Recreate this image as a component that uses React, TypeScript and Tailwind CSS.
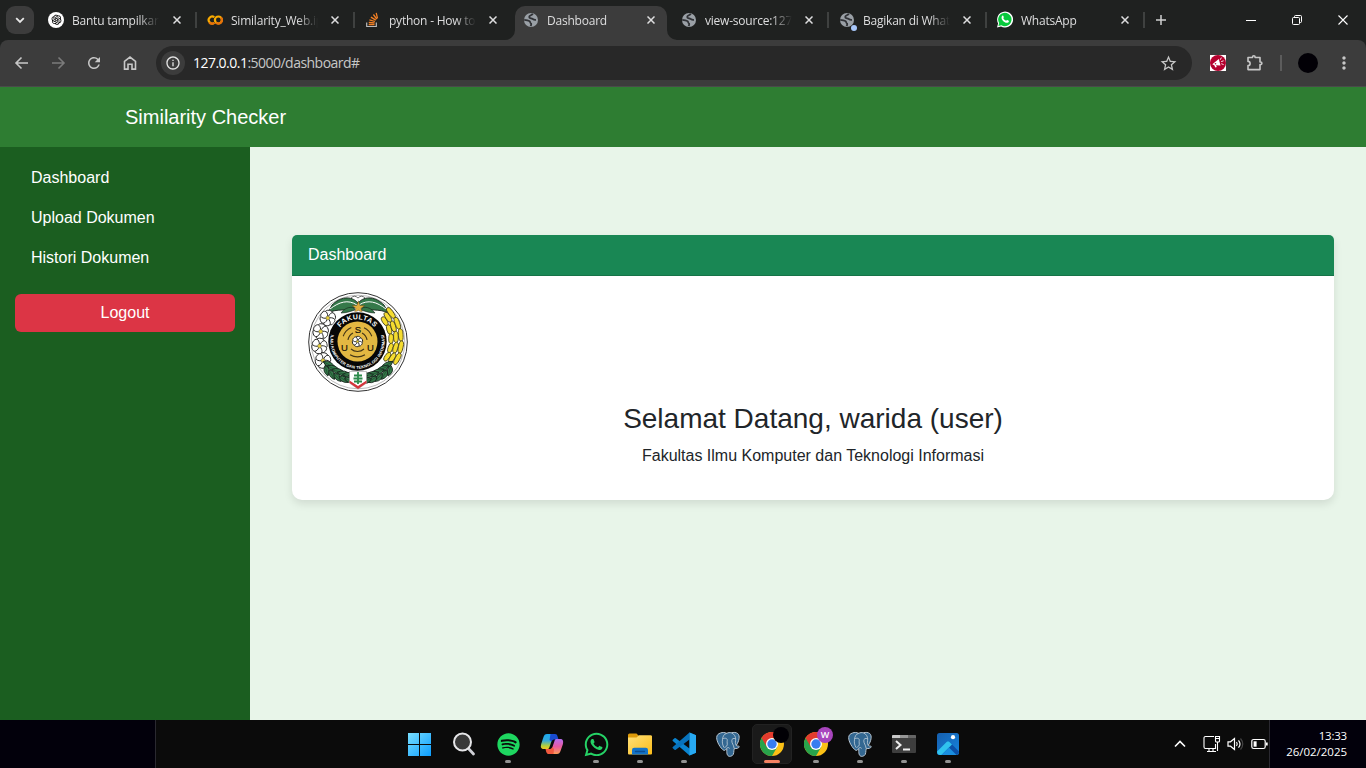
import React from "react";
import { AiOutlineOpenAI } from "react-icons/ai";
import { FaSpotify, FaWhatsapp } from "react-icons/fa";
import { MdRefresh, MdStarBorder, MdMoreVert, MdOutlineInfo } from "react-icons/md";

const range = (n: number) => Array.from({ length: n }, (_, i) => i);

/* ---------- tab icons ---------- */

function Globe() {
  return (
    <svg width="16" height="16" viewBox="0 0 16 16">
      <circle cx="8" cy="8" r="7" fill="#9aa0a6" />
      <path
        d="M9.8 1.8C8.8 3.600 6.200 3 6.200 5c0 1.600 2.200 1 3.200 1.800 1 .7 1.300 1.200 3.600 1"
        fill="none"
        stroke="#303236"
        strokeWidth="1.8"
      />
      <path d="M1.200 7.800C3.500 8 5 8.200 6.300 9c1.500.8.3 1.700 1.500 2.300.9.4.3 1.800-.3 2.700" fill="none" stroke="#303236" strokeWidth="1.8" />
    </svg>
  );
}

function OpenAiIcon() {
  return (
    <span className="flex size-4 items-center justify-center rounded-full bg-white text-black">
      <AiOutlineOpenAI size={13} />
    </span>
  );
}

function Colab() {
  return (
    <svg width="16" height="16" viewBox="0 0 16 16" fill="none" strokeWidth="2.2">
      <path d="M7.300 5.200A3.500 3.500 0 1 0 7.300 10.800" stroke="#f9ab00" />
      <path d="M2.300 10.500a3.500 3.500 0 0 0 5 .3" stroke="#e8710a" />
      <circle cx="11.400" cy="8" r="3.500" stroke="#f9ab00" />
      <path d="M8.900 10.500a3.500 3.500 0 0 0 5-5" stroke="#e8710a" />
    </svg>
  );
}

function StackOverflow() {
  return (
    <svg width="16" height="16" viewBox="0 0 16 16" fill="none">
      <path d="M1.700 10.400v4.100h9.600v-4.100" stroke="#bcbbbb" strokeWidth="1.2" />
      <path
        d="M3.700 12.500h5.800M3.800 10.300l5.800.6M4.400 7.800l5.500 1.700M5.900 5.100l4.900 3M8.400 2.500l3.400 4.600M11.200.9l1.300 5.500"
        stroke="#f48024"
        strokeWidth="1.3"
      />
    </svg>
  );
}

function BadgedGlobe() {
  return (
    <span className="relative block size-4">
      <Globe />
      <span className="absolute -right-[2px] -bottom-[3px] size-[6px] rounded-full bg-[#a8c7fa]" />
    </span>
  );
}

function WhatsTab() {
  return (
    <svg width="17" height="17" viewBox="0 0 16 16">
      <path d="M0 16l1.100-4.100A8 8 0 1 1 4 14.900z" fill="#fff" />
      <path d="M1.400 14.600l.8-3A6.700 6.700 0 1 1 4.500 13.800z" fill="#08c93c" />
      <path
        d="M5.300 4.200c.8-.5 1 0 1.500 1.400.2.500-.6.9-.5 1.200.6 1.200 1.500 2 2.800 2.500.4.100.8-.9 1.200-.7 1.500.7 1.800.8 1.500 1.600-.6 1.500-2.600 1.300-4.400.2C5.400 9.200 3.400 6.200 5.300 4.200z"
        fill="#fff"
      />
    </svg>
  );
}

const tabs = [
  { title: "Bantu tampilkan", icon: <OpenAiIcon />, sep: true },
  { title: "Similarity_Web.ip", icon: <Colab />, sep: true },
  { title: "python - How to", icon: <StackOverflow />, sep: false },
  { title: "Dashboard", icon: <Globe />, active: true, sep: false },
  { title: "view-source:127.", icon: <Globe />, sep: true },
  { title: "Bagikan di What", icon: <BadgedGlobe />, sep: true },
  { title: "WhatsApp", icon: <WhatsTab />, sep: true },
];

function Cross({ size = 8, stroke = 1.5 }: { size?: number; stroke?: number }) {
  return (
    <svg width={size} height={size} viewBox={`0 0 ${size} ${size}`} stroke="currentColor" strokeWidth={stroke}>
      <path d={`M.5 .5L${size - 0.5} ${size - 0.5}M${size - 0.5} .5L.5 ${size - 0.5}`} />
    </svg>
  );
}

function TabStrip() {
  return (
    <div className="flex h-10 bg-[#1f2120] text-[#dededf]">
      <div className="mt-1.5 ml-1.5 flex size-7 items-center justify-center rounded-[9px] bg-[#3c3c3c]">
        <svg width="10" height="7" viewBox="0 0 10 7" fill="none" stroke="#e8e8e8" strokeWidth="1.8">
          <path d="M1.200 1.200 5 5l3.800-3.800" />
        </svg>
      </div>
      <div className="ml-1 flex">
        {tabs.map((t) => (
          <div key={t.title} className="group relative flex h-10 w-[158px] items-center pl-[11px] first:pl-[10px]">
            {t.active && (
              <svg className="absolute top-0 left-0 overflow-visible" width="158" height="40" viewBox="0 0 158 40">
                <path d="M-7 40A10 10 0 0 0 3 30V16A10 10 0 0 1 13 6H145A10 10 0 0 1 155 16V30A10 10 0 0 0 165 40z" fill="#3c3c3c" />
              </svg>
            )}
            <span className="relative -mt-px flex size-4 shrink-0 items-center justify-center">{t.icon}</span>
            <span className="relative mt-[2px] ml-2 w-[87px] overflow-hidden text-xs tracking-[-0.22px] whitespace-nowrap [mask-image:linear-gradient(to_right,#000_76%,transparent)]">
              {t.title}
            </span>
            <span className="relative ml-[13px] flex size-2 group-first:ml-[14px]">
              <Cross />
            </span>
            {t.sep && <span className="absolute top-3 -right-px h-4 w-[2px] bg-[#3f4140]" />}
          </div>
        ))}
      </div>
      <svg className="mt-[15px] ml-[12px]" width="10" height="10" viewBox="0 0 10 10" stroke="#d0d0d0" strokeWidth="1.5">
        <path d="M5 0v10M0 5h10" />
      </svg>
      <div className="ml-auto flex h-10 items-center text-white">
        <div className="flex w-[46px] justify-center">
          <span className="h-px w-[10px] bg-white" />
        </div>
        <div className="flex w-[46px] justify-center">
          <svg width="10" height="10" viewBox="0 0 10 10" fill="none" stroke="#fff">
            <rect x=".5" y="2.500" width="7" height="7" rx="1" />
            <path d="M2.500 2.500V1.500a1 1 0 0 1 1-1h5a1 1 0 0 1 1 1v5a1 1 0 0 1-1 1h-1" />
          </svg>
        </div>
        <div className="flex w-[46px] justify-center">
          <Cross size={10} stroke={1.1} />
        </div>
      </div>
    </div>
  );
}

function Arrow({ flip = false }: { flip?: boolean }) {
  return (
    <svg width="16" height="16" viewBox="0 0 16 16" fill="none" stroke="currentColor" strokeWidth="1.6">
      <path d={flip ? "M2 8h11.500M8.500 2.500 14 8l-5.500 5.500" : "M14 8H2.500M7.500 2.500 2 8l5.500 5.500"} />
    </svg>
  );
}

function Toolbar() {
  return (
    <div className="bg-[#1f2120]">
      <div className="flex h-[47px] items-center rounded-t-[8px] border-b border-[#4a4a4a] bg-[#3c3c3c] pl-[14px] text-[#c7c7c7]">
        <Arrow />
        <span className="ml-5 text-[#7b7b7b]">
          <Arrow flip />
        </span>
        <MdRefresh size={18} className="ml-[19px]" />
        <svg className="ml-5" width="14" height="16" viewBox="0 0 14 16" fill="none" stroke="currentColor" strokeWidth="1.6">
          <path d="M1.500 6.300 7 2l5.500 4.300v7.800H9V9.200H5v4.900H1.500z" />
        </svg>
        <div className="ml-[19px] flex h-[34px] w-[1036px] items-center rounded-full bg-[#282828] pl-[5px]">
          <span className="flex size-6 items-center justify-center rounded-full bg-[#3c3c3c] text-[#e3e3e3]">
            <MdOutlineInfo size={16} />
          </span>
          <span className="ml-2 text-sm tracking-[-0.52px] text-[#c7c7c7]">
            <span className="text-white">127.0.0.1</span>:5000/dashboard#
          </span>
          <MdStarBorder size={19} className="mr-[14px] ml-auto" />
        </div>
        <svg className="ml-[18px]" width="16" height="16" viewBox="0 0 16 16">
          <rect width="16" height="16" fill="#fff" />
          <circle cx="8" cy="8" r="8" fill="#b5002e" />
          <path d="M2.300 9.200 8.800 4l1.700 6.500-4.500-.3.800 1.800-1.500.5-1-2.300z" fill="#fff" />
          <circle cx="5.500" cy="8.700" r=".8" fill="#b5002e" />
          <path d="M10.200 4.800l1.200-2.200M11.200 6.600l2.400-.8M11.300 8.700l2.300.9" stroke="#fff" strokeWidth=".9" />
        </svg>
        <svg className="ml-5" width="18" height="18" viewBox="0 0 18 18" fill="none" stroke="currentColor" strokeWidth="1.6" strokeLinejoin="round">
          <path d="M2 3.500H6.500V3a1.300 1.300 0 0 1 2.600 0v.5H14V8h.6a1.300 1.300 0 0 1 0 2.600H14v5H2v-4a2.100 2.100 0 0 0 0-4.200z" />
        </svg>
        <span className="ml-[16px] h-4 w-[2px] bg-[#5c5c5c]" />
        <span className="ml-[16px] size-5 rounded-full bg-[#020006]" />
        <MdMoreVert size={20} className="ml-4" />
      </div>
    </div>
  );
}

/* ---------- faculty emblem ---------- */

function Flower({ x, y, r, n = 6 }: { x: number; y: number; r: number; n?: number }) {
  return (
    <g transform={`translate(${x} ${y})`}>
      {range(n).map((i) => (
        <path
          key={i}
          transform={`rotate(${(i * 360) / n + 12})`}
          d={`M0 0C${-r * 0.6} ${-r * 0.45} ${-r * 0.65} ${-r} 0 ${-r}C${r * 0.65} ${-r} ${r * 0.55} ${-r * 0.45} 0 0z`}
          fill="#fff"
          stroke="#222"
          strokeWidth=".9"
        />
      ))}
      <circle r={r * 0.25} fill="#e8cf3a" stroke="#555" strokeWidth=".5" />
    </g>
  );
}

function Leaf({ x, y, a, l, w = 4 }: { x: number; y: number; a: number; l: number; w?: number }) {
  return (
    <g transform={`translate(${x} ${y}) rotate(${a})`}>
      <path d={`M0 0Q${l * 0.45} ${-w * 1.6} ${l} 0Q${l * 0.45} ${w * 1.3} 0 0z`} fill="#35794a" stroke="#14221a" strokeWidth=".8" />
      <path d={`M1 0H${l - 1}`} stroke="#183822" strokeWidth=".5" />
    </g>
  );
}

function Emblem() {
  const star = range(10)
    .map((i) => {
      const r = i % 2 ? 2.7 : 6.8;
      const a = (i * Math.PI) / 5 - Math.PI / 2;
      return `${50.4 + r * Math.cos(a)},${15.6 + r * Math.sin(a)}`;
    })
    .join(" ");
  return (
    <svg width="100" height="100" viewBox="0 0 100 100" className="block font-['Liberation_Sans',sans-serif]">
      <circle cx="50" cy="50" r="49.3" fill="#fff" stroke="#333" strokeWidth="1" />
      <circle cx="50" cy="50" r="46.8" fill="none" stroke="#777" strokeWidth=".5" />
      <path d="M43 6q3.500-3.500 7 0 3.500-3.500 7 0l-3 5h-8z" fill="#fff" stroke="#333" strokeWidth=".7" />
      <path d="M50 11C43 3 32 5 24 13Q22 17 20 21C29 16 38 20 49 15z" fill="#35794a" stroke="#14221a" strokeWidth=".9" />
      <path d="M50 11C57 3 68 5 76 13Q78 17 80 21C71 16 62 20 51 15z" fill="#35794a" stroke="#14221a" strokeWidth=".9" />
      <path d="M49 13C40 7 31 10 22 17M51 13C60 7 69 10 78 17" fill="none" stroke="#fff" strokeWidth="1" />
      <path d="M46 16C41 14 36 17 33 21 39 21 43 19 47 18zM54 16C59 14 64 17 67 21 61 21 57 19 53 18z" fill="#35794a" stroke="#14221a" strokeWidth=".6" />
      <polygon points={star} fill="#dfad3d" stroke="#5d481c" strokeWidth=".5" />
      {range(3).map((c) =>
        range(5).map((r) => {
          const deg = -36 + r * 16 - c * 2;
          const a = (deg * Math.PI) / 180;
          const rad = 33.6 + c * 5;
          const h = rad * 0.145;
          return (
            <g key={`${c}-${r}`} transform={`translate(${49.5 + rad * Math.cos(a)} ${49 + rad * Math.sin(a)}) rotate(${deg})`}>
              <path
                d={`M0 ${-h}Q3.200 ${-h} 2.400 0Q2 ${h} 0 ${h}Q-2.900 ${h} -2.300 0Q-2 ${-h} 0 ${-h}z`}
                fill="#f5dc30"
                stroke="#3d3919"
                strokeWidth=".8"
              />
            </g>
          );
        })
      )}
      <Flower x={19.8} y={26} r={7.800} />
      <Flower x={12.7} y={39.5} r={7.800} />
      <Flower x={11.500} y={54} r={7.800} />
      <Flower x={15} y={68.5} r={7.800} />
      {range(6).map((i) => {
        const a = ((142 - i * 9) * Math.PI) / 180;
        const x = 50 + 38 * Math.cos(a);
        const y = 50 + 38 * Math.sin(a);
        return (
          <g key={i}>
            <Leaf x={x - 5} y={y - 4} a={30 - i * 6} l={15} w={3.6} />
            <Leaf x={x - 3} y={y} a={75 - i * 14} l={11} w={3.600} />
            <Leaf x={105 - x} y={y - 4} a={150 + i * 6} l={15} w={3.600} />
            <Leaf x={103 - x} y={y} a={105 + i * 14} l={11} w={3.600} />
          </g>
        );
      })}
      <circle cx="49.500" cy="49.500" r="30" fill="#fff" />
      <circle cx="49.500" cy="49.500" r="29.200" fill="#070707" />
      <circle cx="49.500" cy="49.500" r="20" fill="#e3b842" />
      <path
        d="M43.300 35.600A15.200 15.200 0 0 0 35.200 44.300M56 35.700A15.200 15.200 0 0 1 63.800 44.300M42 62.700A15.200 15.200 0 0 0 57 62.700M45 41A9.700 9.700 0 0 0 40 48M54 41A9.700 9.700 0 0 1 59 48M43 57A9.700 9.700 0 0 0 56 57"
        fill="none"
        stroke="#453717"
        strokeWidth="1.1"
      />
      <Flower x={49.500} y={49.500} r={5.200} />
      <g fontSize="9.5" fill="#171307" textAnchor="middle" stroke="#171307" strokeWidth=".2">
        <text x="50" y="40.500">S</text>
        <text x="36.500" y="58.500">U</text>
        <text x="62.500" y="58.500">U</text>
      </g>
      <defs>
        <path id="ringTop" d="M27.300 49.500A22.200 22.200 0 0 1 71.700 49.500" />
        <path id="ringBottom" d="M23.500 41.500A27.200 27.200 0 1 0 75.500 41.500" />
      </defs>
      <text fontSize="7" fontWeight="700" fill="#fff" letterSpacing=".4" textAnchor="middle">
        <textPath href="#ringTop" startOffset="50%">
          FAKULTAS
        </textPath>
      </text>
      <text fontSize="4.1" fontWeight="700" fill="#fff" textAnchor="middle">
        <textPath href="#ringBottom" startOffset="50%" textLength="99">
          ILMU KOMPUTER DAN TEKNOLOGI INFORMASI
        </textPath>
      </text>
      <path d="M41.500 79.500H58.500V91L50 97 41.500 91z" fill="#fff" stroke="#999" strokeWidth=".6" />
      <path d="M41.500 88.500 50 94 58.500 88.500V91L50 97 41.500 91z" fill="#d5343b" />
      <path d="M50 80v12M46 83.500h8M45.500 86.500h9M46 89.500h8" stroke="#2b8a4a" strokeWidth="1.8" />
    </svg>
  );
}

/* ---------- application page ---------- */

function Page() {
  return (
    <div className="flex h-[633px] flex-col font-['Liberation_Sans',Arial,sans-serif] text-base leading-6">
      <header className="flex h-[60px] shrink-0 items-center bg-[#2e7d32] pl-[125px] text-xl text-white">Similarity Checker</header>
      <div className="flex min-h-0 flex-1">
        <nav className="flex w-[250px] shrink-0 flex-col bg-[#1b5e20] px-[15px] pt-[11px] text-white">
          {["Dashboard", "Upload Dokumen", "Histori Dokumen"].map((l) => (
            <a key={l} href="#" className="px-4 py-2">
              {l}
            </a>
          ))}
          <button className="mt-4 h-[38px] rounded-md bg-[#dc3545]">Logout</button>
        </nav>
        <main className="flex-1 bg-[#e8f5e9] pt-[88px] pr-8 pl-[42px]">
          <section className="h-[265px] rounded-t-[5px] rounded-b-[10px] bg-white shadow-[0_4px_8px_rgba(0,0,0,0.1)]">
            <h2 className="h-[41px] rounded-t-[5px] border-b border-[#167347] bg-[#198754] px-4 pt-2 text-white">Dashboard</h2>
            <div className="p-4 text-center text-[#212529]">
              <div className="h-[110px]">
                <Emblem />
              </div>
              <h1 className="mb-2 text-[28px] leading-[34px]">Selamat Datang, warida (user)</h1>
              <p>Fakultas Ilmu Komputer dan Teknologi Informasi</p>
            </div>
          </section>
        </main>
      </div>
    </div>
  );
}

/* ---------- taskbar ---------- */

function WindowsLogo() {
  return (
    <svg width="24" height="24" viewBox="0 0 24 24">
      <defs>
        <linearGradient id="win" x1="0" y1="0" x2="24" y2="24" gradientUnits="userSpaceOnUse">
          <stop stopColor="#7be0ff" />
          <stop offset="1" stopColor="#0a9cff" />
        </linearGradient>
      </defs>
      <path d="M0 1h11v11H0zM12 1h11v11H12zM0 13h11v11H0zM12 13h11v11H12z" fill="url(#win)" />
    </svg>
  );
}

function SearchIcon() {
  return (
    <svg width="24" height="24" viewBox="0 0 24 24">
      <path d="m16 16 5.500 6" stroke="#cfd0d6" strokeWidth="2.8" strokeLinecap="round" />
      <circle cx="10.500" cy="10" r="8.500" fill="#383838" stroke="#e6e6e8" strokeWidth="2" />
    </svg>
  );
}

function Copilot() {
  return (
    <svg width="24" height="24" viewBox="0 0 24 24">
      <defs>
        <linearGradient id="cpa" x1="0" y1="0" x2="0" y2="1">
          <stop stopColor="#1ba8f0" />
          <stop offset=".45" stopColor="#35a9d8" />
          <stop offset=".8" stopColor="#b8cf35" />
          <stop offset="1" stopColor="#f0c526" />
        </linearGradient>
        <linearGradient id="cpb" x1="0" y1="0" x2="0" y2="1">
          <stop stopColor="#b76df2" />
          <stop offset=".5" stopColor="#e85aa0" />
          <stop offset="1" stopColor="#ff9c55" />
        </linearGradient>
      </defs>
      <path d="M7 2h7L9.500 15c-.5 1.400-1 2-2 2H4C1 17 .3 15.500 1.200 12L3.500 5C4.200 3 5 2 7 2z" fill="url(#cpa)" />
      <path d="M10.500 2H15c1.600 0 2 .8 2.500 2.300L18.500 7.500H15c-2 0-2.700.5-3.300 2L9.500 8z" fill="#194bd0" />
      <path d="M17 22h-7l4.500-13c.5-1.400 1-2 2-2H20c3 0 3.700 2 2.800 5.500L20.500 19c-.7 2-1.500 3-3.500 3z" fill="url(#cpb)" />
      <path d="M13.500 22H9c-1.600 0-2.300-.8-2.800-2.300L5.500 17H9c2 0 2.500-.5 3.200-2L14 17z" fill="#f2593e" />
    </svg>
  );
}

function Folder() {
  return (
    <svg width="24" height="24" viewBox="0 0 24 24">
      <defs>
        <linearGradient id="fold" x1="0" y1="0" x2="1" y2="1">
          <stop stopColor="#ffe17a" />
          <stop offset="1" stopColor="#fcbc19" />
        </linearGradient>
      </defs>
      <path d="M0 3a1.500 1.500 0 0 1 1.500-1.500h7L11 4v6H0z" fill="#dd9a09" />
      <path d="M0 5.500h8.500L11 3.300h11.500A1.500 1.500 0 0 1 24 5v16.500a1 1 0 0 1-1 1H1a1 1 0 0 1-1-1z" fill="url(#fold)" />
      <path d="M4 22.500V18a2.200 2.200 0 0 1 2.200-2.200h11.600A2.200 2.200 0 0 1 20 18v4.500z" fill="#1373c8" />
      <path d="M7.500 19.500h9" stroke="#0b4d91" strokeWidth="1.3" strokeLinecap="round" />
    </svg>
  );
}

function VsCode() {
  return (
    <svg width="24" height="24" viewBox="0 0 24 24">
      <path d="M17.500.500 24 3.300v17.400l-6.500 2.800L.8 9a.8.800 0 0 1 0-1.200l1.700-1.500a1 1 0 0 1 1.300 0L17.500 16.500z" fill="#0a84d0" />
      <path d="M17.500.500V7.500L3.800 17.700a1 1 0 0 1-1.300 0L.8 16.200a.8.800 0 0 1 0-1.200z" fill="#0873bd" />
      <path d="M17.500.500 24 3.300v17.400l-6.500 2.800z" fill="#27a9f2" />
    </svg>
  );
}

function Postgres() {
  return (
    <svg width="26" height="26" viewBox="0 0 26 26">
      <path
        d="M5.500 2c2-.8 4.500-.6 6.200.3 1.700-.8 3-.9 4.800-.5 2-.6 4.700-.6 6.300.8 2.500 2.200 1.300 7.500-1.500 11.800.5 1 2.500.3 3 1.200-.4 1.700-3 2.300-5 1.800-.9 2.500.2 6-2.500 7.500-3.600 1.500-5-.7-5-4.400v-3c-1.200.9-1.500 2.300-3 1.800C5.500 17.500 1.500 10.500 1.700 6.500 1.800 4 3.300 2.700 5.500 2z"
        fill="#336791"
        stroke="#b9c7d3"
        strokeWidth="1"
      />
      <path
        d="M9 16.500c-1.300-2.500-2-4.500-1.500-8C7.800 5 9.300 3 11.700 2.300M9.500 16.500c2-1 3.200-1.700 2.700-4.500-.4-2 .8-3-.6-4.300-1.200-.8-2.700-.5-4 .2M16.500 1.800c3 1.500 4.200 4 4.200 6.200 0 2.500-1 4 .6 6.400M20.500 7.700c-2-.7-3.700-.2-3.700 2 0 3 1.700 3.500 2.300 7.500M11.800 17c1.200-.7 2.500-.5 2.700.5"
        fill="none"
        stroke="#c3d0da"
        strokeWidth=".8"
      />
    </svg>
  );
}

function Chrome({ badge }: { badge: "dark" | "w" }) {
  return (
    <span className="relative block size-6">
      <svg width="24" height="24" viewBox="0 0 24 24">
        <circle cx="12" cy="12" r="12" fill="#fbc116" />
        <path d="M12 12 1.600 6A12 12 0 0 0 12 24l5.200-9z" fill="#28a34b" />
        <path d="M1.600 6A12 12 0 0 1 22.400 6H12L6.800 15z" fill="#e33b2e" />
        <circle cx="12" cy="12" r="6" fill="#fff" />
        <circle cx="12" cy="12" r="4.700" fill="#377df0" />
      </svg>
      {badge === "dark" ? (
        <span className="absolute -top-[5px] left-[13px] size-4 rounded-full bg-[#010005]" />
      ) : (
        <span className="absolute -top-[5px] left-[13px] flex size-4 items-center justify-center rounded-full bg-[#a845bd] text-[9px] font-semibold text-white">
          W
        </span>
      )}
    </span>
  );
}

function Terminal() {
  return (
    <svg width="24" height="24" viewBox="0 0 24 24">
      <rect y="3" width="24" height="18" rx="1" fill="#3e3e3e" />
      <path d="M1 3h7v3H0V4a1 1 0 0 1 1-1z" fill="#c8c8c8" />
      <path d="M8 3h8v3H8z" fill="#969696" />
      <path d="M16 3h7a1 1 0 0 1 1 1v2h-8z" fill="#666" />
      <path d="m4 9 4.500 4L4 17M11 17.500h7" fill="none" stroke="#eee" strokeWidth="2" />
    </svg>
  );
}

function Photos() {
  return (
    <svg width="22" height="22" viewBox="0 0 22 22">
      <defs>
        <linearGradient id="ph" x1="0" y1="0" x2="1" y2="1">
          <stop stopColor="#165fae" />
          <stop offset="1" stopColor="#1583de" />
        </linearGradient>
      </defs>
      <rect width="22" height="22" rx="2.500" fill="url(#ph)" />
      <path d="M0 18.500 9.500 9a2 2 0 0 1 3 0l9.500 9.500c0 2-1.300 3.500-3 3.500H3c-1.700 0-3-1.500-3-3.500z" fill="#0b50a8" />
      <path d="M0 18.500 9.500 9a2 2 0 0 1 3 0L15 11.500 4.500 22H3c-1.700 0-3-1.500-3-3.500z" fill="#30c3ee" />
      <path d="M4.500 22 12 14.500 19.500 22z" fill="#1a8fe0" />
      <circle cx="16" cy="4.200" r="2.100" fill="#fff" />
    </svg>
  );
}

const apps: { icon: React.ReactNode; running?: boolean; active?: boolean }[] = [
  { icon: <WindowsLogo /> },
  { icon: <SearchIcon /> },
  { icon: <FaSpotify size={23} color="#1ed760" />, running: true },
  { icon: <Copilot /> },
  { icon: <FaWhatsapp size={27} color="#25d366" />, running: true },
  { icon: <Folder />, running: true },
  { icon: <VsCode />, running: true },
  { icon: <Postgres /> },
  { icon: <Chrome badge="dark" />, active: true },
  { icon: <Chrome badge="w" />, running: true },
  { icon: <Postgres />, running: true },
  { icon: <Terminal />, running: true },
  { icon: <Photos />, running: true },
];

function Taskbar() {
  return (
    <footer className="flex h-12 bg-[#0b0b0b] text-white">
      <div className="w-[156px] border-r border-[#2a2930] bg-[#02000b]" />
      <div className="ml-[242px] flex">
        {apps.map((a, i) => (
          <div key={i} className="relative flex w-11 items-center justify-center">
            {a.active && <span className="absolute inset-x-[2px] inset-y-1 rounded-[5px] border border-[#222] bg-[#1a1a1a]" />}
            <span className="relative">{a.icon}</span>
            {a.running && <span className="absolute bottom-[5px] left-[19px] h-[3px] w-[6px] rounded-full bg-[#929292]" />}
            {a.active && <span className="absolute bottom-[5px] left-[14px] h-[3px] w-4 rounded-full bg-[#f58263]" />}
          </div>
        ))}
      </div>
      <div className="ml-auto flex items-center">
        <svg width="12" height="8" viewBox="0 0 12 8" fill="none" stroke="#fff" strokeWidth="1.600">
          <path d="m1 6.500 5-5 5 5" />
        </svg>
        <svg className="ml-[17px]" width="18" height="18" viewBox="0 0 18 18" fill="none" stroke="#fff" strokeWidth="1.1">
          <path d="M11 1.500H2.500A1.500 1.500 0 0 0 1 3v9a1.500 1.500 0 0 0 1.500 1.500H12.500V9M4 16.500h9M6 13.500v3M10 13.500v3" />
          <path d="M12.500 1.500h4V6a1 1 0 0 1-1 1h-2a1 1 0 0 1-1-1zM12.500 3.500h4M14.500 7v9" />
        </svg>
        <svg className="ml-[6px]" width="17" height="16" viewBox="0 0 17 16" fill="none" stroke="#fff" strokeWidth="1.2">
          <path d="M1 5.800h2.500L7.500 2.500v11L3.500 10.200H1zM9.500 6q1.500 2 0 4M11.500 4.300q3 3.700 0 7.400" />
          <path d="M13.500 2.500q4.500 5.500 0 11" stroke="#444" />
        </svg>
        <svg className="ml-[7px]" width="17" height="12" viewBox="0 0 17 12" fill="none" stroke="#fff" strokeWidth="1.2">
          <rect x=".8" y="1.500" width="13.4" height="9" rx="1.800" />
          <path d="M15.800 4.500v3" strokeWidth="1.8" />
          <rect x="2.600" y="3.300" width="3" height="5.400" fill="#fff" stroke="none" />
        </svg>
        <div className="ml-px flex h-12 w-[97px] flex-col items-end border-l border-[#2a2930] bg-[#02000b] pt-2 pr-[19px] text-[11.5px] leading-4 tracking-[-0.02px]">
          <span className="tracking-[-0.2px]">13:33</span>
          <span>26/02/2025</span>
        </div>
      </div>
    </footer>
  );
}

export default function App() {
  return (
    <div className="h-[768px] w-[1366px] overflow-hidden font-['Open_Sans','Noto_Sans',sans-serif]">
      <TabStrip />
      <Toolbar />
      <Page />
      <Taskbar />
    </div>
  );
}
